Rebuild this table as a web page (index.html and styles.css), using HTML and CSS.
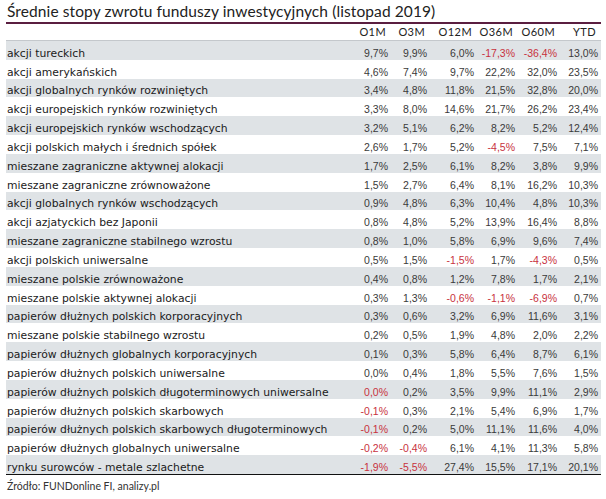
FILE: index.html
```html
<!DOCTYPE html>
<html lang="pl">
<head>
<meta charset="utf-8">
<title>Średnie stopy zwrotu funduszy inwestycyjnych</title>
<link rel="stylesheet" href="styles.css">
</head>
<body>
<div class="wrap">
  <div class="title">Średnie stopy zwrotu funduszy inwestycyjnych (listopad 2019)</div>
  <div class="row head">
    <span></span><span>O1M</span><span>O3M</span><span>O12M</span><span>O36M</span><span>O60M</span><span>YTD</span>
  </div>
  <div class="body">
    <div class="row"><span class="lbl">akcji tureckich</span><span>9,7%</span><span>9,9%</span><span>6,0%</span><span class="neg">-17,3%</span><span class="neg">-36,4%</span><span>13,0%</span></div>
    <div class="row"><span class="lbl">akcji amerykańskich</span><span>4,6%</span><span>7,4%</span><span>9,7%</span><span>22,2%</span><span>32,0%</span><span>23,5%</span></div>
    <div class="row"><span class="lbl">akcji globalnych rynków rozwiniętych</span><span>3,4%</span><span>4,8%</span><span>11,8%</span><span>21,5%</span><span>32,8%</span><span>20,0%</span></div>
    <div class="row"><span class="lbl">akcji europejskich rynków rozwiniętych</span><span>3,3%</span><span>8,0%</span><span>14,6%</span><span>21,7%</span><span>26,2%</span><span>23,4%</span></div>
    <div class="row"><span class="lbl">akcji europejskich rynków wschodzących</span><span>3,2%</span><span>5,1%</span><span>6,2%</span><span>8,2%</span><span>5,2%</span><span>12,4%</span></div>
    <div class="row"><span class="lbl">akcji polskich małych i średnich spółek</span><span>2,6%</span><span>1,7%</span><span>5,2%</span><span class="neg">-4,5%</span><span>7,5%</span><span>7,1%</span></div>
    <div class="row"><span class="lbl">mieszane zagraniczne aktywnej alokacji</span><span>1,7%</span><span>2,5%</span><span>6,1%</span><span>8,2%</span><span>3,8%</span><span>9,9%</span></div>
    <div class="row"><span class="lbl">mieszane zagraniczne zrównoważone</span><span>1,5%</span><span>2,7%</span><span>6,4%</span><span>8,1%</span><span>16,2%</span><span>10,3%</span></div>
    <div class="row"><span class="lbl">akcji globalnych rynków wschodzących</span><span>0,9%</span><span>4,8%</span><span>6,3%</span><span>10,4%</span><span>4,8%</span><span>10,3%</span></div>
    <div class="row"><span class="lbl">akcji azjatyckich bez Japonii</span><span>0,8%</span><span>4,8%</span><span>5,2%</span><span>13,9%</span><span>16,4%</span><span>8,8%</span></div>
    <div class="row"><span class="lbl">mieszane zagraniczne stabilnego wzrostu</span><span>0,8%</span><span>1,0%</span><span>5,8%</span><span>6,9%</span><span>9,6%</span><span>7,4%</span></div>
    <div class="row"><span class="lbl">akcji polskich uniwersalne</span><span>0,5%</span><span>1,5%</span><span class="neg">-1,5%</span><span>1,7%</span><span class="neg">-4,3%</span><span>0,5%</span></div>
    <div class="row"><span class="lbl">mieszane polskie zrównoważone</span><span>0,4%</span><span>0,8%</span><span>1,2%</span><span>7,8%</span><span>1,7%</span><span>2,1%</span></div>
    <div class="row"><span class="lbl">mieszane polskie aktywnej alokacji</span><span>0,3%</span><span>1,3%</span><span class="neg">-0,6%</span><span class="neg">-1,1%</span><span class="neg">-6,9%</span><span>0,7%</span></div>
    <div class="row"><span class="lbl">papierów dłużnych polskich korporacyjnych</span><span>0,3%</span><span>0,6%</span><span>3,2%</span><span>6,9%</span><span>11,6%</span><span>3,1%</span></div>
    <div class="row"><span class="lbl">mieszane polskie stabilnego wzrostu</span><span>0,2%</span><span>0,5%</span><span>1,9%</span><span>4,8%</span><span>2,0%</span><span>2,2%</span></div>
    <div class="row"><span class="lbl">papierów dłużnych globalnych korporacyjnych</span><span>0,1%</span><span>0,3%</span><span>5,8%</span><span>6,4%</span><span>8,7%</span><span>6,1%</span></div>
    <div class="row"><span class="lbl">papierów dłużnych polskich uniwersalne</span><span>0,0%</span><span>0,4%</span><span>1,8%</span><span>5,5%</span><span>7,6%</span><span>1,5%</span></div>
    <div class="row"><span class="lbl">papierów dłużnych polskich długoterminowych uniwersalne</span><span class="neg">0,0%</span><span>0,2%</span><span>3,5%</span><span>9,9%</span><span>11,1%</span><span>2,9%</span></div>
    <div class="row"><span class="lbl">papierów dłużnych polskich skarbowych</span><span class="neg">-0,1%</span><span>0,3%</span><span>2,1%</span><span>5,4%</span><span>6,9%</span><span>1,7%</span></div>
    <div class="row"><span class="lbl">papierów dłużnych polskich skarbowych długoterminowych</span><span class="neg">-0,1%</span><span>0,2%</span><span>5,0%</span><span>11,1%</span><span>11,6%</span><span>4,0%</span></div>
    <div class="row"><span class="lbl">papierów dłużnych globalnych uniwersalne</span><span class="neg">-0,2%</span><span class="neg">-0,4%</span><span>6,1%</span><span>4,1%</span><span>11,3%</span><span>5,8%</span></div>
    <div class="row"><span class="lbl">rynku surowców - metale szlachetne</span><span class="neg">-1,9%</span><span class="neg">-5,5%</span><span>27,4%</span><span>15,5%</span><span>17,1%</span><span>20,1%</span></div>
  </div>
  <div class="source">Źródło: FUNDonline FI, analizy.pl</div>
</div>
</body>
</html>
```

FILE: styles.css
```css
* { box-sizing: border-box; }
html, body { margin: 0; padding: 0; background: #ffffff; }

.wrap {
  margin-left: 6px;
  width: 595px;
}

.title {
  font-family: Lato, "Open Sans", sans-serif;
  font-size: 15.5px;
  color: #222;
  height: 24px;
  padding: 2px 0 0 1px;
  line-height: 19px;
  border-bottom: 2px solid #5a1e40;
  letter-spacing: 0.1px;
}

.row {
  display: grid;
  grid-template-columns: 339px 43px 39px 47px 41px 42px 41px;
  padding-right: 3px;
  height: 18.83px;
  align-items: end;
  line-height: 13px;
}

.row span {
  text-align: right;
  font-family: "Liberation Sans", Arial, sans-serif;
  font-size: 10.5px;
  color: #3a3a3a;
  white-space: nowrap;
}

.row .lbl {
  text-align: left;
  padding-left: 1px;
  font-family: "DejaVu Sans", Verdana, sans-serif;
  font-size: 10.8px;
  color: #1a1a1a;
}

.row .neg { color: #c8323e; }

.head {
  height: 17px;
  border-bottom: 1px solid #c4c8cc;
  padding-bottom: 2px;
}
.head span {
  font-family: Lato, "Open Sans", sans-serif;
  font-size: 11px;
  color: #222;
  padding-right: 2px;
  letter-spacing: 0.4px;
}

.body { border-bottom: 1px solid #111; }
.body .row:nth-child(odd) { background: #dfe3e6; }

.source {
  font-family: Lato, "Open Sans", sans-serif;
  font-size: 10.5px;
  color: #333;
  padding: 5px 0 0 1px;
}
```
